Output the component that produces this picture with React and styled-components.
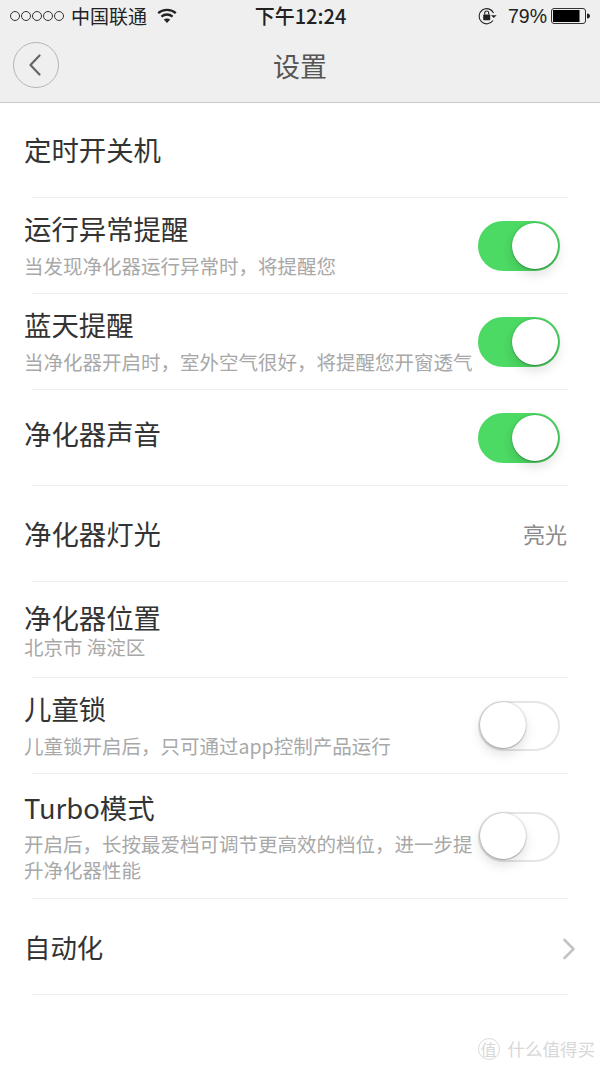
import React from "react";
import styled, { createGlobalStyle } from "styled-components";

const cjk = `"Noto Sans CJK SC", "Noto Sans", sans-serif`;

const Global = createGlobalStyle`
  html, body { margin: 0; padding: 0; background: #fff; }
  body { font-family: ${cjk}; }
`;

const Page = styled.div`
  position: relative;
  width: 600px;
  height: 1067px;
  overflow: hidden;
  background: #fff;
`;

const Header = styled.header`
  height: 102px;
  background: #efefef;
  border-bottom: 1px solid #c9c9c9;
`;

const StatusBar = styled.div`
  height: 32px;
  display: flex;
  align-items: center;
  padding: 0 9px 0 10px;
  color: #222;
`;

const StatusLeft = styled.div`
  flex: 1;
  display: flex;
  align-items: center;
`;

const Dots = styled.div`
  display: flex;
  gap: 1px;
  margin-right: 7px;
`;

const Dot = styled.span`
  width: 10px;
  height: 10px;
  box-sizing: border-box;
  border: 1px solid #333;
  border-radius: 50%;
`;

const Carrier = styled.span`
  font-size: 19px;
  line-height: 24px;
  margin-right: 10px;
`;

const Clock = styled.div`
  font-size: 20px;
  line-height: 24px;
  width: 100px;
  text-align: center;
  white-space: nowrap;
  font-weight: 500;
`;

const StatusRight = styled.div`
  flex: 1;
  display: flex;
  justify-content: flex-end;
  align-items: center;
`;

const Percent = styled.span`
  font-family: "Liberation Sans", sans-serif;
  font-size: 19.5px;
  margin: 0 4px 0 11px;
`;

const NavBar = styled.div`
  height: 70px;
  display: flex;
  align-items: center;
  position: relative;
  padding-left: 13px;
`;

const BackButton = styled.div`
  width: 46px;
  height: 46px;
  box-sizing: border-box;
  border: 1px solid #b5b5b5;
  border-radius: 50%;
  display: flex;
  align-items: center;
  justify-content: center;
  margin-top: -4px;
  padding-right: 2px;
`;

const Title = styled.h1`
  position: absolute;
  left: 0;
  right: 0;
  top: 15px;
  margin: 0;
  text-align: center;
  font-size: 27px;
  line-height: 38px;
  font-weight: 400;
  color: #555;
`;

const Row = styled.div`
  height: ${(p) => p.$h || 95}px;
  display: flex;
  align-items: ${(p) => (p.$top ? "flex-start" : "center")};
  padding: 0 32px 0 24px;
  box-sizing: border-box;
`;

const RowText = styled.div`
  flex: 1;
  min-width: 0;
`;

const RowTitle = styled.div`
  font-size: ${(p) => p.$size || 27.4}px;
  line-height: 32px;
  color: #333;
  margin-top: ${(p) => p.$mt || 0}px;
`;

const RowSub = styled.div`
  font-size: 19.5px;
  line-height: 26px;
  color: #a8a8a8;
  margin-top: ${(p) => p.$mt ?? 9}px;
  width: ${(p) => p.$w || 450}px;
  white-space: ${(p) => (p.$wrap ? "normal" : "nowrap")};
`;

const Value = styled.span`
  font-size: 22px;
  color: #8c8c8c;
  margin: -2px 1px 0 0;
`;

const Divider = styled.div`
  height: 1px;
  margin: 0 32px;
  background: #eeeeee;
`;

const Track = styled.div`
  position: relative;
  flex: none;
  width: 82px;
  height: 50px;
  box-sizing: border-box;
  border-radius: 25px;
  margin: ${(p) => p.$mt || 0}px 8px 0 0;
  background: ${(p) => (p.$on ? "#4cd964" : "#fff")};
  border: 2px solid ${(p) => (p.$on ? "#4cd964" : "#e5e5e5")};
`;

const Knob = styled.div`
  position: absolute;
  top: ${(p) => (p.$on ? 0 : -1)}px;
  ${(p) => (p.$on ? "right: 0;" : "left: 0;")}
  width: 46px;
  height: 46px;
  border-radius: 50%;
  background: #fff;
  box-shadow: 0 1px 1px rgba(0, 0, 0, 0.22), 0 6px 12px rgba(0, 0, 0, 0.12), 0 0 2px rgba(0, 0, 0, 0.28);
`;

const Toggle = ({ on, offset }) => (
  <Track $on={on} $mt={offset}>
    <Knob $on={on} />
  </Track>
);

const Watermark = styled.div`
  position: absolute;
  right: 5px;
  bottom: 3px;
  display: flex;
  align-items: center;
  gap: 8px;
  color: #d8d8d8;
  font-size: 17.5px;
  line-height: 30px;
`;

const WatermarkBadge = styled.span`
  width: 22px;
  height: 22px;
  box-sizing: border-box;
  border: 1px solid #dcdcdc;
  border-radius: 50%;
  display: flex;
  align-items: center;
  justify-content: center;
  font-size: 16px;
`;

const Wifi = () => (
  <svg width="20" height="16" viewBox="0 0 20 16" fill="none" stroke="#222" strokeWidth="2.3">
    <path d="M1.2 5.2 C6 .8 14 .8 18.8 5.2" />
    <path d="M4.4 8.6 C7.6 5.8 12.4 5.8 15.6 8.6" />
    <path d="M10 15 L6.8 11.6 C8.6 10.2 11.4 10.2 13.2 11.6 Z" fill="#222" stroke="none" />
  </svg>
);

const RotationLock = () => (
  <svg width="19" height="18" viewBox="0 0 19 18" fill="none">
    <path d="M15 13.5 A7.6 7.6 0 1 1 15.6 6" stroke="#222" strokeWidth="1.1" />
    <path d="M13 8.2 H18.6 L15.8 11 Z" fill="#222" />
    <rect x="5.2" y="7.6" width="7" height="5.6" rx=".7" fill="#222" />
    <path d="M6.7 7.6 V6 a2 2 0 0 1 4 0 V7.6" stroke="#222" strokeWidth="1.1" />
  </svg>
);

const Battery = () => (
  <svg width="40" height="16" viewBox="0 0 40 16">
    <rect x=".5" y=".5" width="34" height="15" rx="2.5" fill="none" stroke="#333" />
    <rect x="2" y="2" width="26.5" height="12" fill="#000" />
    <path d="M36 5.5 C38 5.7 39 6.6 39 8 C39 9.4 38 10.3 36 10.5 Z" fill="#222" />
  </svg>
);

const BackChevron = () => (
  <svg width="14" height="22" viewBox="0 0 14 22" fill="none" stroke="#666" strokeWidth="2.2" strokeLinecap="round" strokeLinejoin="round">
    <path d="M11.5 1.5 L2.5 11 L11.5 20.5" />
  </svg>
);

const ChevronSlot = styled.span`
  display: flex;
  margin: 4px -8px 0 0;
`;

const ForwardChevron = () => (
  <ChevronSlot>
    <svg width="14" height="22" viewBox="0 0 14 22" fill="none" stroke="#c4c4c8" strokeWidth="2.6" strokeLinecap="round" strokeLinejoin="round">
      <path d="M2.5 2 L11.5 11 L2.5 20" />
    </svg>
  </ChevronSlot>
);

export default function App() {
  return (
    <Page>
      <Global />
      <Header>
        <StatusBar>
          <StatusLeft>
            <Dots>
              {[0, 1, 2, 3, 4].map((i) => (
                <Dot key={i} />
              ))}
            </Dots>
            <Carrier>中国联通</Carrier>
            <Wifi />
          </StatusLeft>
          <Clock>下午12:24</Clock>
          <StatusRight>
            <RotationLock />
            <Percent>79%</Percent>
            <Battery />
          </StatusRight>
        </StatusBar>
        <NavBar>
          <BackButton>
            <BackChevron />
          </BackButton>
          <Title>设置</Title>
        </NavBar>
      </Header>

      <Row $h={94}>
        <RowText>
          <RowTitle $mt={-2}>定时开关机</RowTitle>
        </RowText>
      </Row>
      <Divider />

      <Row>
        <RowText>
          <RowTitle>运行异常提醒</RowTitle>
          <RowSub>当发现净化器运行异常时，将提醒您</RowSub>
        </RowText>
        <Toggle on />
      </Row>
      <Divider />

      <Row>
        <RowText>
          <RowTitle>蓝天提醒</RowTitle>
          <RowSub>当净化器开启时，室外空气很好，将提醒您开窗透气</RowSub>
        </RowText>
        <Toggle on />
      </Row>
      <Divider />

      <Row>
        <RowText>
          <RowTitle $mt={-10}>净化器声音</RowTitle>
        </RowText>
        <Toggle on />
      </Row>
      <Divider />

      <Row>
        <RowText>
          <RowTitle $mt={-2}>净化器灯光</RowTitle>
        </RowText>
        <Value>亮光</Value>
      </Row>
      <Divider />

      <Row>
        <RowText>
          <RowTitle $mt={2}>净化器位置</RowTitle>
          <RowSub $mt={1}>北京市 海淀区</RowSub>
        </RowText>
      </Row>
      <Divider />

      <Row>
        <RowText>
          <RowTitle>儿童锁</RowTitle>
          <RowSub>儿童锁开启后，只可通过app控制产品运行</RowSub>
        </RowText>
        <Toggle />
      </Row>
      <Divider />

      <Row $h={124} $top>
        <RowText>
          <RowTitle $mt={17}>Turbo模式</RowTitle>
          <RowSub $wrap $w={454} $mt={8}>
            开启后，长按最爱档可调节更高效的档位，进一步提升净化器性能
          </RowSub>
        </RowText>
        <Toggle offset={38} />
      </Row>
      <Divider />

      <Row>
        <RowText>
          <RowTitle $size={26.4}>自动化</RowTitle>
        </RowText>
        <ForwardChevron />
      </Row>
      <Divider />

      <Watermark>
        <WatermarkBadge>值</WatermarkBadge>
        <span>什么值得买</span>
      </Watermark>
    </Page>
  );
}
